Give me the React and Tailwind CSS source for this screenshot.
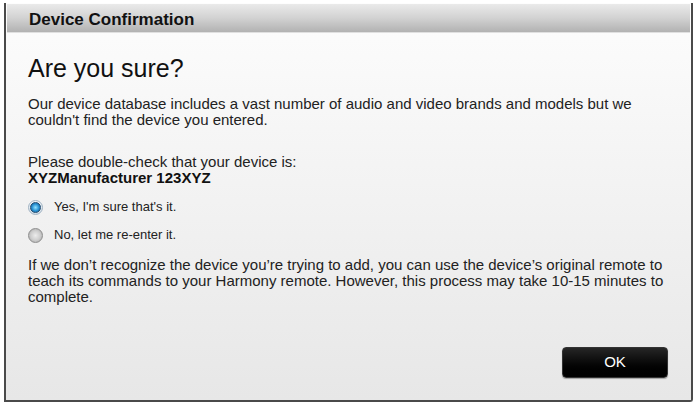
export default function App() {
  return (
    <div className="w-[696px] h-[406px] bg-white pt-[3px] pl-[4px] pr-[3px] pb-[4px]" style={{ fontFamily: '"Liberation Sans", Arial, sans-serif' }}>
      <div className="h-full flex flex-col border-l-2 border-r-2 border-b-2 border-[#4a4a4a] rounded-br-[3px] bg-gradient-to-b from-[#fdfdfd] to-[#e7e7e7]">
        {/* Header */}
        <div className="h-[29px] shrink-0 mt-[1px] ml-[1px] mr-[1px] bg-gradient-to-b from-[#eaeaea] via-[#d2d2d2] to-[#b2b2b2] pt-[7px] pl-[22px] border-b border-[#e0e0e0]">
          <span className="block text-[17px] leading-[17px] font-bold text-[#111]">Device Confirmation</span>
        </div>

        {/* Body */}
        <div className="flex-1 flex flex-col pl-[22px] pr-[15px] text-[#222]">
          <h1 className="text-[25px] leading-[28px] mt-[21px] text-[#111]">Are you sure?</h1>
          <p className="text-[15px] leading-[16px] mt-[14px]">
            Our device database includes a vast number of audio and video brands and models but we couldn't find the device you entered.
          </p>
          <p className="text-[15px] leading-[16px] mt-[26px]">Please double-check that your device is:</p>
          <p className="text-[15px] leading-[16px] font-bold text-[#111]">XYZManufacturer 123XYZ</p>

          <div className="flex flex-col gap-[12px] mt-[13px]">
            <label className="flex items-center gap-[11px] text-[13px] leading-[16px]">
              <span className="w-[15px] h-[15px] rounded-full border border-[#9fb2c2] bg-gradient-to-b from-[#f4f7fa] to-[#d3dde6] flex items-center justify-center">
                <span className="w-[11px] h-[11px] rounded-full bg-radial from-[#8fe4ff] via-[#2b96d6] to-[#0d568f] border border-[#1d4a70]" />
              </span>
              Yes, I'm sure that's it.
            </label>
            <label className="flex items-center gap-[11px] text-[13px] leading-[16px]">
              <span className="w-[15px] h-[15px] rounded-full border border-[#8e8e8e] bg-radial from-[#ececec] via-[#cfcfcf] to-[#a2a2a2]" />
              No, let me re-enter it.
            </label>
          </div>

          <p className="text-[15px] leading-[16px] mt-[14px]">
            If we don’t recognize the device you’re trying to add, you can use the device’s original remote to teach its commands to your Harmony remote. However, this process may take 10-15 minutes to complete.
          </p>

          <div className="mt-auto mb-[22px] flex justify-end pr-[8px]">
            <button className="w-[106px] h-[31px] rounded-[4px] border border-[#333] bg-gradient-to-b from-[#262626] via-[#0a0a0a] to-[#000] text-white text-[15px] shadow-[0_1px_1px_rgba(0,0,0,0.3)]">
              OK
            </button>
          </div>
        </div>
      </div>
    </div>
  )
}
